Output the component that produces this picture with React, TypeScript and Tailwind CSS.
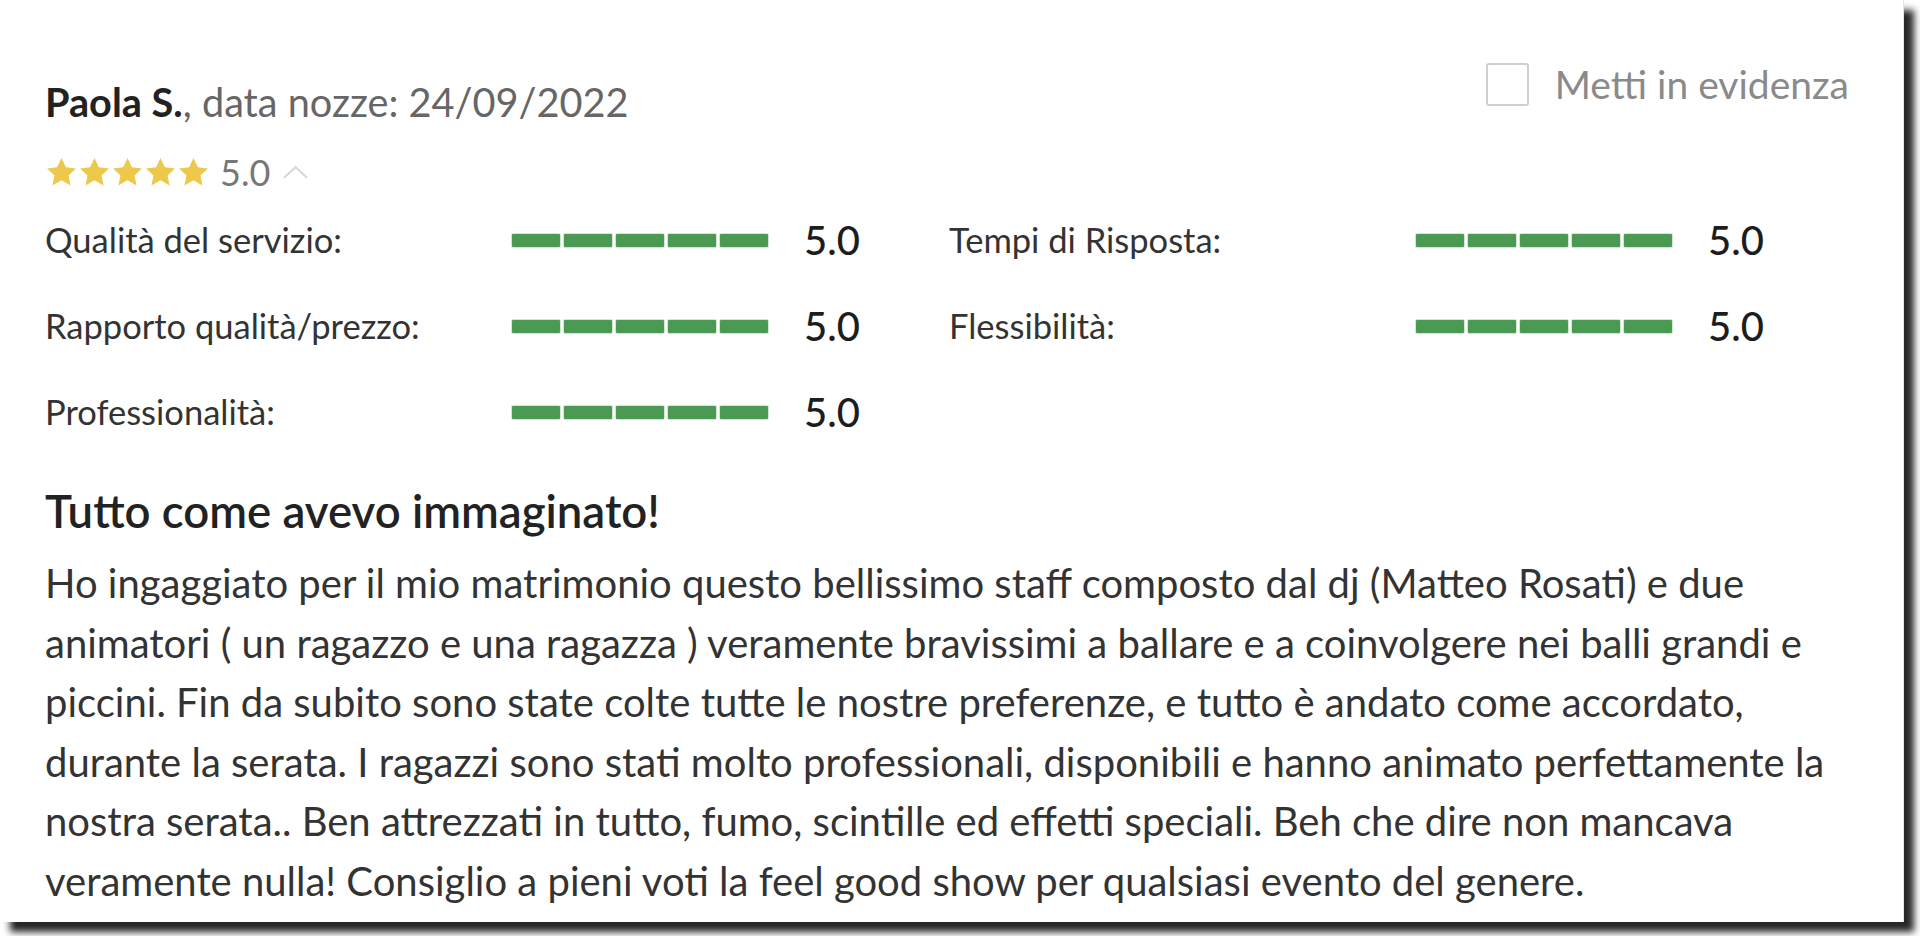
import React from 'react';

const FONT = { fontFamily: 'Lato, "Open Sans", sans-serif' };

const Star = () => (
  <svg viewBox="0 0 24 24" className="w-[33px] h-[33px]">
    <path
      d="M12 1.5l3.2 6.7 7.3.9-5.4 5 1.5 7.3L12 17.7l-6.6 3.7 1.5-7.3-5.4-5 7.3-.9z"
      fill="#edc84a"
    />
  </svg>
);

interface Rating {
  label: string;
  value: string;
}

const left: Rating[] = [
  { label: 'Qualità del servizio:', value: '5.0' },
  { label: 'Rapporto qualità/prezzo:', value: '5.0' },
  { label: 'Professionalità:', value: '5.0' },
];

const right: Rating[] = [
  { label: 'Tempi di Risposta:', value: '5.0' },
  { label: 'Flessibilità:', value: '5.0' },
];

const Bar = () => (
  <div className="flex gap-[4px] w-[256px]">
    {[0, 1, 2, 3, 4].map((i) => (
      <div key={i} className="h-[13px] flex-1 bg-[#4a9a54] rounded-[1px] ring-1 ring-[#cfe8cf]" />
    ))}
  </div>
);

const RatingRow = ({ item }: { item: Rating }) => (
  <div className="flex items-center h-[86px]">
    <div className="w-[467px] text-[34.5px] text-[#333]">{item.label}</div>
    <Bar />
    <div className="ml-[36px] text-[40px] font-medium text-[#1d1d1d]">{item.value}</div>
  </div>
);

export default function App() {
  return (
    <div className="w-[1920px] h-[936px] bg-white overflow-hidden" style={FONT}>
      <div className="w-[1904px] h-[922px] bg-white border-r border-[#e6e6e6] shadow-[10px_10px_7px_rgba(0,0,0,0.85)] pl-[45px] pr-[54px] pt-[60px]">
        <div className="flex justify-between items-start">
          <div className="text-[39.7px] text-[#666] leading-[84px]">
            <span className="font-bold text-[#222]">Paola S.</span>, data nozze: 24/09/2022
          </div>
          <label className="flex items-center gap-[26px] -mt-[5px]">
            <span className="w-[43px] h-[43px] border-2 border-[#cfcfcf] rounded-[3px]" />
            <span className="text-[39px] text-[#8a8a8a]">Metti in evidenza</span>
          </label>
        </div>

        <div className="flex items-center h-[56px]">
          <div className="flex">
            {[0, 1, 2, 3, 4].map((i) => (
              <Star key={i} />
            ))}
          </div>
          <span className="ml-[10px] text-[36px] text-[#777]">5.0</span>
          <svg viewBox="0 0 28 16" className="ml-[12px] w-[27px] h-[16px]">
            <path d="M2 14L14 3l12 11" fill="none" stroke="#d6d6d6" strokeWidth="2" />
          </svg>
        </div>

        <div className="flex -mt-[3px]">
          <div className="w-[904px]">
            {left.map((r) => (
              <RatingRow key={r.label} item={r} />
            ))}
          </div>
          <div>
            {right.map((r) => (
              <RatingRow key={r.label} item={r} />
            ))}
          </div>
        </div>

        <h2 className="mt-[26px] text-[45.5px] font-semibold text-[#222] leading-[60px]">
          Tutto come avevo immaginato!
        </h2>
        <p className="mt-[13px] text-[40px] text-[#333] leading-[59.5px] whitespace-nowrap">
          Ho ingaggiato per il mio matrimonio questo bellissimo staff composto dal dj (Matteo Rosati) e due
          <br />
          animatori ( un ragazzo e una ragazza ) veramente bravissimi a ballare e a coinvolgere nei balli grandi e
          <br />
          piccini. Fin da subito sono state colte tutte le nostre preferenze, e tutto è andato come accordato,
          <br />
          durante la serata. I ragazzi sono stati molto professionali, disponibili e hanno animato perfettamente la
          <br />
          nostra serata.. Ben attrezzati in tutto, fumo, scintille ed effetti speciali. Beh che dire non mancava
          <br />
          veramente nulla! Consiglio a pieni voti la feel good show per qualsiasi evento del genere.
        </p>
      </div>
    </div>
  );
}
